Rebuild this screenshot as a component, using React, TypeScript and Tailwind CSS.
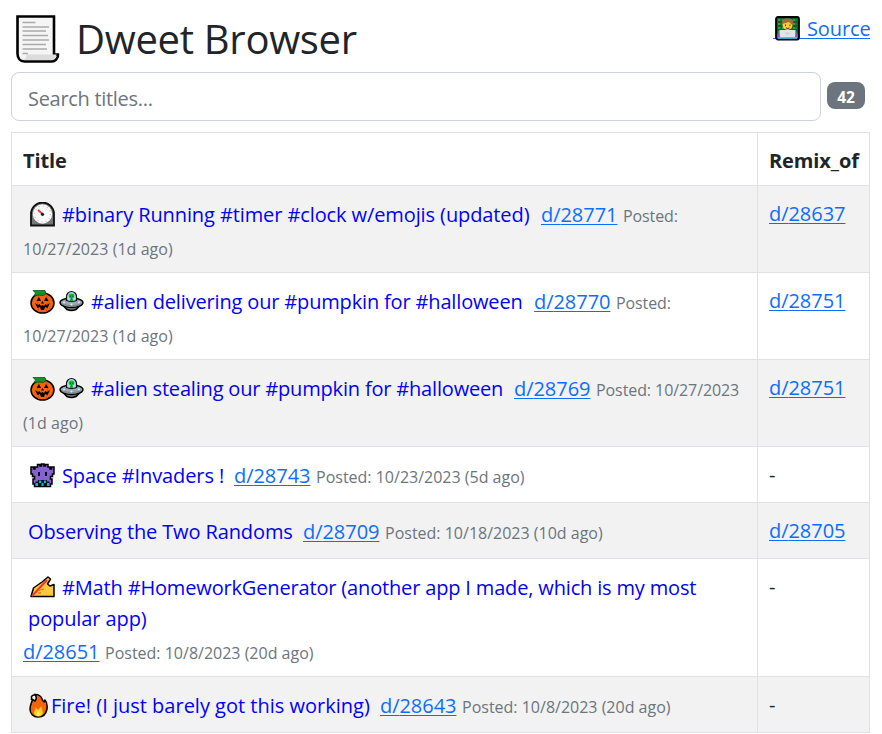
import React from "react";

type Dweet = {
  icons: React.ReactNode[];
  lines: { text: string; width: string }[];
  id: string;
  posted: string;
  postedWidth: string;
  postedRest?: string;
  remixOf?: string;
  height: string;
};

function ScrollIcon() {
  return (
    <svg className="h-[48px] w-[44px]" viewBox="0 0 44 48">
      <path d="M1.5 1.5H38V39.5H42C42.500 43 39 46.500 36 46.500H8.5C4 46.500 1.5 43 1.5 38.500Z" fill="#f5f5f5" stroke="#000" strokeWidth="2.600" />
      <path d="M10.500 39.500H40.500Q39.500 44.700 35.500 45H7.500Q10.500 43 10.500 39.500Z" fill="#dcdcdc" />
      <path d="M6.500 7.500H19.500M6.500 12H33M6.500 16H30M6.500 20.500H32M6.500 25H33M6.500 29.500H30M6.500 34H31M6.500 38.500H12" stroke="#aaa" strokeWidth="1.300" />
    </svg>
  );
}

function CoderIcon() {
  return (
    <svg className="h-[25px] w-[25px]" viewBox="0 0 25 25">
      <rect x="1" y="1" width="23" height="22.500" rx="2" fill="#155c2b" stroke="#000" strokeWidth="1.800" />
      <path d="M3 4H22M3 8H22M3 12H22M3 16H22" stroke="#26a548" strokeWidth="2.200" strokeDasharray="2.500 1.200" />
      <path d="M2 22V19Q3 15.500 7 15.500H18Q22 15.500 23 19V22Z" fill="#8c4fc4" />
      <circle cx="12.500" cy="9" r="5" fill="#ffc83d" />
      <path d="M7 8.500C6 3 10 2 13 2.500C18 2.500 19 5 18 9C16 8 15 7 14 6C12 7 9 7 7 8.500Z" fill="#a56a3a" />
      <path d="M10.500 8.500V10M15 8.500V10M11 12Q12.800 13 14.500 12" fill="none" stroke="#503020" />
      <path d="M4.500 14H20.500L20 21.500H5Z" fill="#e4e4e8" />
      <path d="M10.500 17.500H14.500" stroke="#d0d0d4" strokeWidth="2" />
      <path d="M3 22H22" stroke="#50c6ef" strokeWidth="1.500" />
    </svg>
  );
}

function ClockIcon() {
  return (
    <svg className="h-[25px] w-[25px]" viewBox="0 0 25 25">
      <path d="M1 23.500V12A11.500 11.500 0 0 1 24 12V23.500Z" fill="#777" stroke="#111" strokeWidth="1.800" />
      <circle cx="12.500" cy="12" r="9.700" fill="#fafafa" />
      <circle cx="12.500" cy="12" r="8" fill="none" stroke="#bbb" strokeWidth="1.200" strokeDasharray="1 3.190" />
      <path d="M8 8L12.500 12" stroke="#e03a3a" strokeWidth="1.700" />
      <circle cx="12.500" cy="12.300" r="1.600" fill="#17212c" />
    </svg>
  );
}

function PumpkinIcon() {
  return (
    <svg className="h-[25px] w-[25px]" viewBox="0 0 25 25">
      <ellipse cx="12.500" cy="14" rx="11.500" ry="10" fill="#f7630c" stroke="#000" strokeWidth="1.500" />
      <path d="M9 5Q6 14 9 23M16 5Q20 14 16 23" fill="none" stroke="#d94d08" />
      <path d="M3 1.500H15L16 4.500L13.500 6.500L8 6L4 7L5.500 4Z" fill="#119329" stroke="#063f15" strokeWidth=".7" />
      <path d="M9 8L11 12H6.500ZM16 8L18.500 12H14ZM12.500 12L14 14.500H11ZM5 14L8 16L9.500 15L11 17L12.500 16L14 17L15.500 15L17 16L20 14L17.500 19L15 18L14 21H11L10 18L7.500 19Z" fill="#000" />
    </svg>
  );
}

function SaucerIcon() {
  return (
    <svg className="h-[25px] w-[25px]" viewBox="0 0 25 25">
      <path d="M4.500 17L8 20.500Q12.500 22.500 17 20.500L20.500 17Z" fill="#777" stroke="#000" strokeWidth="1.500" />
      <path d="M1 13.500C1 11 6 9 12.500 9S24 11 24 13.500C24 16.500 18 18.500 12.500 18.500S1 16.500 1 13.500Z" fill="#9ba9b2" stroke="#000" strokeWidth="1.400" />
      <path d="M3 14.500Q12.500 19.500 22 14.500" fill="none" stroke="#7f8b93" strokeWidth="1.500" />
      <path d="M7.500 11.500V7.500A5 5 0 0 1 17.500 7.500V11.500Q12.500 13.500 7.500 11.500Z" fill="#a5dcf2" stroke="#111" strokeWidth="1.200" />
      <ellipse cx="12.500" cy="7" rx="2.800" ry="2.400" fill="#16c60c" />
      <path d="M12.500 8.500V11.500M11 11H14" stroke="#119329" strokeWidth="1.500" />
      <path d="M11.500 6.500V8M13.800 6.500V8" stroke="#063" />
      <circle cx="5" cy="13.500" r="1" fill="#e3ebef" />
      <circle cx="12.500" cy="15.500" r="1" fill="#e3ebef" />
      <circle cx="20" cy="13.500" r="1" fill="#e3ebef" />
    </svg>
  );
}

function InvaderIcon() {
  return (
    <svg className="h-[25px] w-[25px]" viewBox="0 0 25 25">
      <path d="M7.500 4V1.500H10V3H11.500V1H14V3H15.500V1.500H18V4H20V6H21.500V4H24V11H22.500V13.500H20.500V16H22V21H20.500V23.500H4.500V21H3V16H4.500V13.500H2.500V11H1V4H3.500V6H5V4Z" fill="#8661d1" stroke="#000" strokeWidth="1.500" />
      <path d="M9 9V13M16 9V13" stroke="#000" strokeWidth="2" />
      <path d="M5.500 18.500H8V17H17V18.500H19.500V20.500H18.500V23H6.500V20.500H5.500Z" fill="#111" />
      <path d="M7 20V23M10 17.500V20M12.500 20V23M15 17.500V20M18 20V23" stroke="#00b7e8" strokeWidth="2" />
    </svg>
  );
}

function WritingIcon() {
  return (
    <svg className="h-[25px] w-[25px]" viewBox="0 0 25 25">
      <path d="M1 21.500L3.500 13L12 7L18 2L20.500 4L17.500 9L20 11L24 9.500V21.500Z" fill="#ffc83d" stroke="#000" strokeWidth="1.500" strokeLinejoin="round" />
      <path d="M2 21L17 5" stroke="#e63c2e" strokeWidth="2.200" />
      <path d="M9 15.500L14 14M8 18L11 18" stroke="#d67d00" strokeWidth="1.300" />
    </svg>
  );
}

function FireIcon() {
  return (
    <svg className="h-[25px] w-[19px]" viewBox="0 0 19 25">
      <path d="M6 1.500C14 1.500 12 7 15 9C15.500 8 15.500 7 16 7C18 9 18.500 12 18 16C17 21.500 14 24 9 24C4 24 1 20.500 1 16C1 12 3 9 3.500 6.500L6 8C8.500 5 7 3 6 1.500Z" fill="#f7630c" stroke="#000" strokeWidth="1.500" />
      <path d="M2.500 7V3.500Q4 1.500 6 2" fill="none" stroke="#000" strokeWidth="1.500" />
      <path d="M6.500 14L9 17L12.500 13C12 17 15.500 19 13 22Q9.500 25 6 22C3.500 19 7 17 6.500 14Z" fill="#ffd21f" />
      <path d="M9 18Q13 23 9 23Q6 23 9 18Z" fill="#fff27a" />
    </svg>
  );
}

const dweets: Dweet[] = [
  {
    icons: [<ClockIcon />],
    lines: [{ text: "#binary Running #timer #clock w/emojis (updated)", width: "w-[468px] tracking-[-0.1px]" }],
    id: "28771",
    posted: "Posted:",
    postedWidth: "w-[54px] tracking-[-0.1px]",
    postedRest: "10/27/2023 (1d ago)",
    remixOf: "28637",
    height: "h-[87px]",
  },
  {
    icons: [<PumpkinIcon />, <SaucerIcon />],
    lines: [{ text: "#alien delivering our #pumpkin for #halloween", width: "w-[432px] tracking-[-0.16px]" }],
    id: "28770",
    posted: "Posted:",
    postedWidth: "w-[54px] tracking-[-0.1px]",
    postedRest: "10/27/2023 (1d ago)",
    remixOf: "28751",
    height: "h-[87px]",
  },
  {
    icons: [<PumpkinIcon />, <SaucerIcon />],
    lines: [{ text: "#alien stealing our #pumpkin for #halloween", width: "w-[412px] tracking-[-0.18px]" }],
    id: "28769",
    posted: "Posted: 10/27/2023",
    postedWidth: "w-[144px] tracking-[-0.08px]",
    postedRest: "(1d ago)",
    remixOf: "28751",
    height: "h-[87px]",
  },
  {
    icons: [<InvaderIcon />],
    lines: [{ text: "Space #Invaders !", width: "w-[161px] tracking-[-0.1px]" }],
    id: "28743",
    posted: "Posted: 10/23/2023 (5d ago)",
    postedWidth: "w-[210px]",
    height: "h-[56px]",
  },
  {
    icons: [],
    lines: [{ text: "Observing the Two Randoms", width: "w-[264px] tracking-[-0.12px]" }],
    id: "28709",
    posted: "Posted: 10/18/2023 (10d ago)",
    postedWidth: "w-[219px]",
    remixOf: "28705",
    height: "h-[56px]",
  },
  {
    icons: [<WritingIcon />],
    lines: [
      { text: "#Math #HomeworkGenerator (another app I made, which is my most", width: "w-[634px] tracking-[-0.16px]" },
      { text: "popular app)", width: "w-[119px] tracking-[-0.1px]" },
    ],
    id: "28651",
    posted: "Posted: 10/8/2023 (20d ago)",
    postedWidth: "w-[210px]",
    height: "h-[118px]",
  },
  {
    icons: [<FireIcon />],
    lines: [{ text: "Fire! (I just barely got this working)", width: "w-[318px]" }],
    id: "28643",
    posted: "Posted: 10/8/2023 (20d ago)",
    postedWidth: "w-[210px]",
    height: "h-[56px]",
  },
];

function DweetLink({ id }: { id: string }) {
  return (
    <a href="#" className="w-[77px] shrink-0 tracking-[-0.05px] text-[#0d6efd] underline decoration-1 underline-offset-[2px]">
      d/{id}
    </a>
  );
}

function TitleCell({ dweet }: { dweet: Dweet }) {
  const [first, second] = dweet.lines;
  const meta = (
    <>
      <DweetLink id={dweet.id} />
      <small className={`ml-[5px] mt-[2px] shrink-0 text-[16px] text-[#6c757d] ${dweet.postedWidth}`}>{dweet.posted}</small>
    </>
  );
  // no space between the emoji and the title here
  const tight = dweet.id === "28643";

  return (
    <div className="pl-[11px] pt-[13px]">
      <div className="flex h-[31px] items-center pl-[5px]">
        {dweet.icons.length > 0 && (
          <div className={tight ? "ml-px mr-[3px] flex" : "ml-[2px] mr-[7px] flex gap-1"}>
            {dweet.icons.map((icon, i) => (
              <React.Fragment key={i}>{icon}</React.Fragment>
            ))}
          </div>
        )}
        <span className={`mr-[11px] shrink-0 text-[#0000ff] ${first.width}`}>{first.text}</span>
        {!second && meta}
      </div>
      {second && (
        <>
          <div className="flex h-[31px] items-center pl-[5px] text-[#0000ff]">
            <span className={second.width}>{second.text}</span>
          </div>
          <div className="flex h-[36px] items-center">{meta}</div>
        </>
      )}
      {dweet.postedRest && (
        <div className="flex h-[38px] items-center text-[16px] tracking-[0.05px] text-[#6c757d]">{dweet.postedRest}</div>
      )}
    </div>
  );
}

export default function App() {
  return (
    <div className="h-[734px] w-[882px] overflow-hidden whitespace-nowrap bg-white font-['Open_Sans',sans-serif] text-[20px] leading-[30px] text-[#212529]">
      <header className="flex h-[72px] items-start justify-between pl-[16px] pr-[12px]">
        <h1 className="flex items-start text-[40px] leading-[48px]">
          <span className="pt-[15px]">
            <ScrollIcon />
          </span>
          <span className="ml-[16px] mt-[15px] w-[282px] tracking-[-0.3px]">Dweet Browser</span>
        </h1>
        <a href="#" className="mt-[13px] flex text-[#0d6efd]">
          <span className="flex h-[26px] w-[34px] border-b border-[#0d6efd] pl-[2px] pt-[3px]">
            <CoderIcon />
          </span>
          <span className="h-[26px] w-[63px] border-b border-[#0d6efd] pt-px tracking-[-0.1px]">Source</span>
        </a>
      </header>

      <div className="flex pl-[11px]">
        <input
          type="text"
          placeholder="Search titles..."
          className="h-[49px] w-[810px] rounded-lg border border-[#ced4da] pl-[16px] pr-[15px] pt-[3px] tracking-[-0.3px] placeholder:text-[#6c757d]"
        />
        <span className="ml-[6px] mt-[10px] flex h-[27px] w-[38px] items-center justify-center rounded-lg bg-[#6c757d] pt-[2px] text-[15.5px] font-bold text-white">
          42
        </span>
      </div>

      <table className="ml-[11px] mt-[11px] w-[859px] table-fixed border-collapse border border-[#dee2e6]">
        <thead>
          <tr className="h-[53px] text-left">
            <th className="w-[746px] border border-[#dee2e6] py-0 pl-[11px] pt-[3px] font-bold tracking-[-0.1px]">Title</th>
            <th className="border border-[#dee2e6] py-0 pl-[11px] pt-[3px] font-bold tracking-[-0.1px]">Remix_of</th>
          </tr>
        </thead>
        <tbody>
          {dweets.map((dweet) => (
            <tr key={dweet.id} className={`odd:bg-[#f2f2f2] ${dweet.height}`}>
              <td className="border border-[#dee2e6] p-0 align-top">
                <TitleCell dweet={dweet} />
              </td>
              <td className="border border-[#dee2e6] p-0 pl-[11px] pt-[13px] align-top">
                {dweet.remixOf ? <DweetLink id={dweet.remixOf} /> : "-"}
              </td>
            </tr>
          ))}
        </tbody>
      </table>
    </div>
  );
}
